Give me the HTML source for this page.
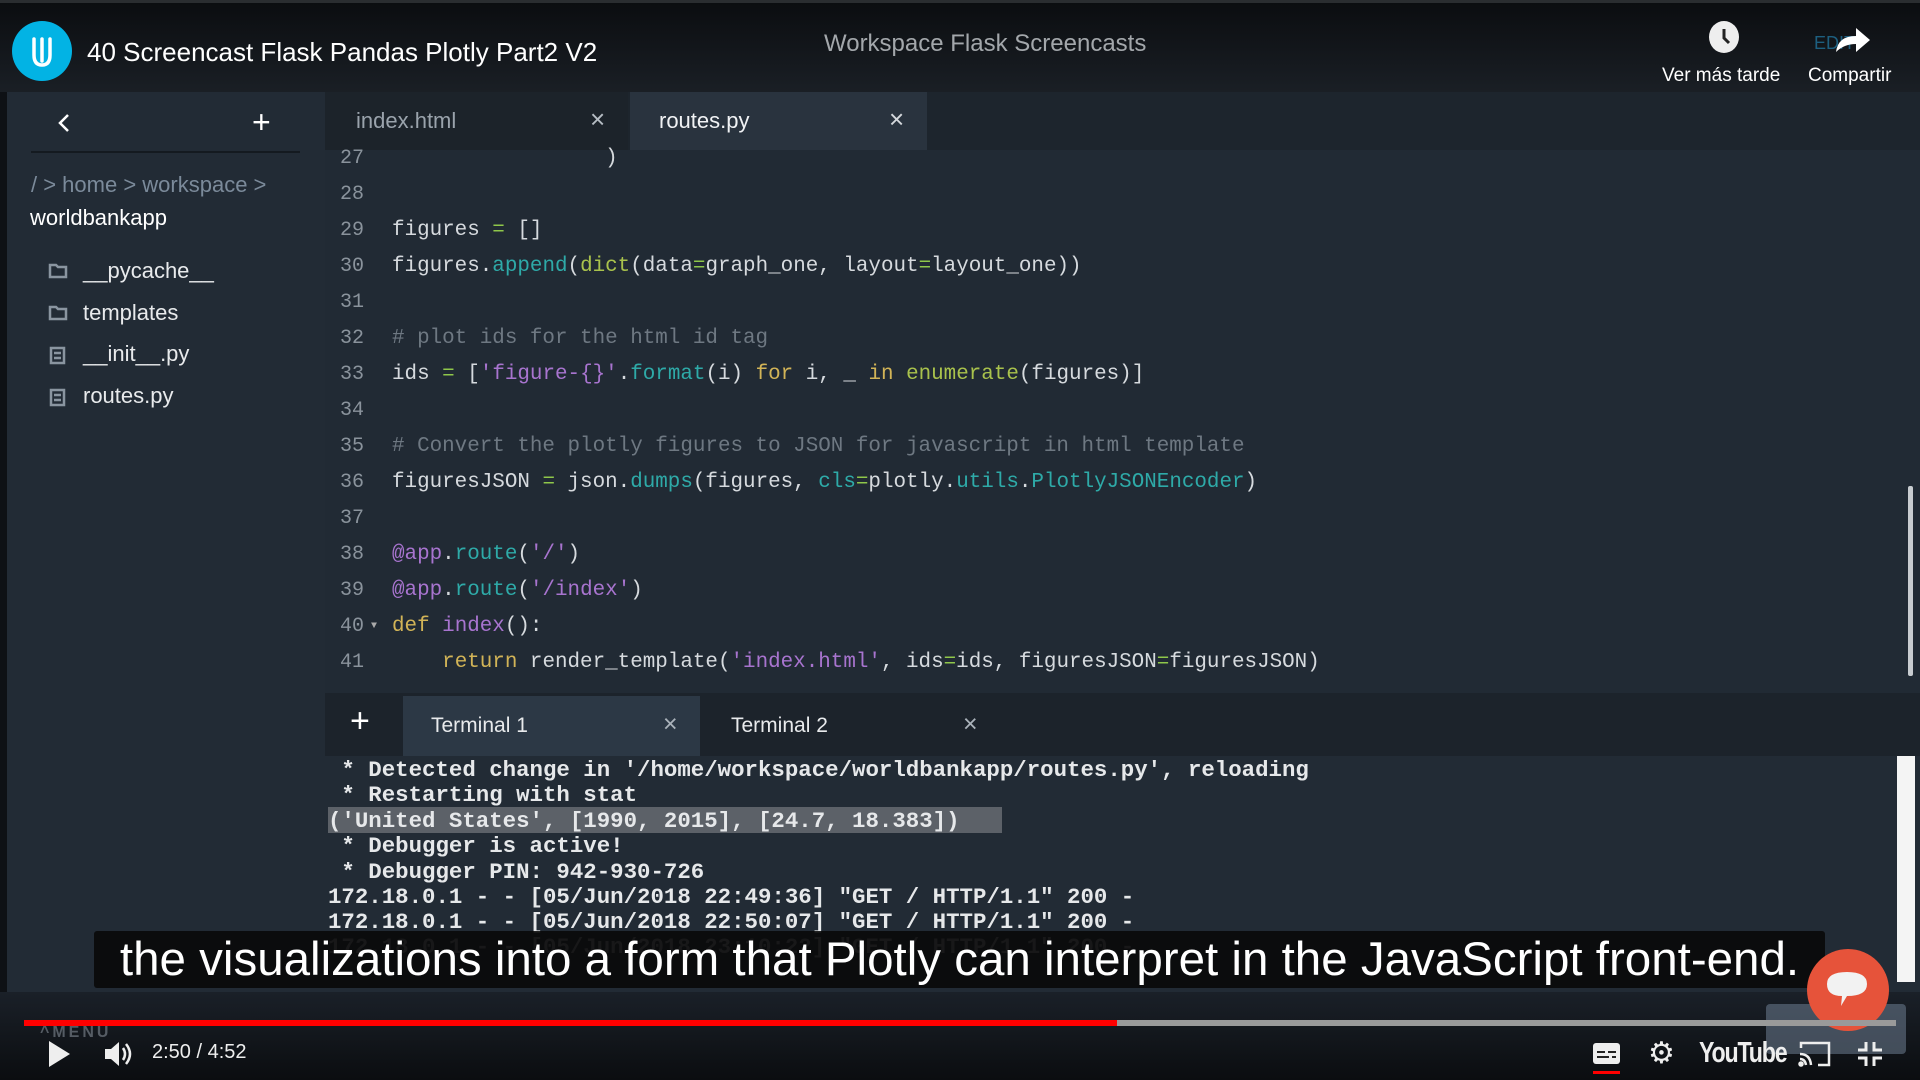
<!DOCTYPE html>
<html><head><meta charset="utf-8"><style>
*{margin:0;padding:0;box-sizing:border-box}
body{width:1920px;height:1080px;overflow:hidden;background:#0e1115;font-family:"Liberation Sans",sans-serif;position:relative}
.a{position:absolute}
.top{left:0;top:0;width:1920px;height:92px;background:linear-gradient(#0b0d10,#1a1f25);border-top:3px solid #2a2d30}
.side{left:7px;top:92px;width:318px;height:900px;background:#222b35}
.tabs{left:325px;top:92px;width:1595px;height:58px;background:#1d252d}
.code{left:325px;top:150px;width:1595px;height:543px;background:#212a34}
.mono{font-family:"Liberation Mono",monospace}
.ln{position:absolute;left:340px;color:#8a939c;font-size:20px}
.cl{position:absolute;left:392px;color:#d6dade;font-size:20.9px;white-space:pre}
.c{color:#6e7882}.t{color:#2eaaa8}.g{color:#a9c24c}.p{color:#a874cf}.y{color:#d2b457}.e{color:#8fc74a}
.term{left:325px;top:756px;width:1595px;height:236px;background:#222b35}
.tl{position:absolute;left:328px;color:#e6e8ea;font-size:22.4px;font-weight:bold;white-space:pre;line-height:25px}
</style></head><body>
<div class="a top"></div>
<div class="a" style="left:12px;top:21px;width:60px;height:60px;border-radius:50%;background:#02b3e4"></div>
<svg class="a" style="left:12px;top:21px" width="60" height="60"><path d="M22 18v16q0 10 8 10t8-10V18M30 18v22" stroke="#fff" stroke-width="3.5" fill="none" stroke-linecap="round"/></svg>
<div class="a" style="left:87px;top:37px;color:#fff;font-size:26px">40 Screencast Flask Pandas Plotly Part2 V2</div>
<div class="a" style="left:824px;top:30px;color:#a3a7ab;font-size:24px">Workspace Flask Screencasts</div>
<div class="a" style="left:1709px;top:21px;width:30px;height:32px;border-radius:50%;background:#eee"></div>
<svg class="a" style="left:1709px;top:21px" width="30" height="32"><path d="M15 8v9l5 5" stroke="#222" stroke-width="3" fill="none"/></svg>
<div class="a" style="left:1662px;top:65px;color:#fff;font-size:19px">Ver más tarde</div>
<div class="a" style="left:1814px;top:33px;color:#1d5f80;font-size:18px">EDIT</div>
<svg class="a" style="left:1832px;top:22px" width="40" height="32"><path d="M4 30q2-16 20-16V6l14 12-14 12v-8q-12 0-20 8z" fill="#fff"/></svg>
<div class="a" style="left:1808px;top:65px;color:#fff;font-size:19px">Compartir</div>

<div class="a side"></div>
<svg class="a" style="left:56px;top:112px" width="16" height="22"><path d="M12 3L4 11l8 8" stroke="#fff" stroke-width="2.5" fill="none"/></svg>
<div class="a" style="left:252px;top:104px;color:#fff;font-size:32px;line-height:36px">+</div>
<div class="a" style="left:31px;top:151px;width:269px;height:2px;background:#141a20"></div>
<div class="a" style="left:31px;top:172px;color:#7b8a9a;font-size:22px">/ &gt; home &gt; workspace &gt;</div>
<div class="a" style="left:30px;top:205px;color:#fff;font-size:22px">worldbankapp</div>
<div class="a" style="left:83px;top:250px;color:#e8eaec;font-size:22px;line-height:41.7px">__pycache__<br>templates<br>__init__.py<br>routes.py</div>
<svg class="a" style="left:48px;top:260px" width="20" height="150" fill="none" stroke="#8a95a0" stroke-width="2.5"><path d="M2 5h6l2 2h8v10H2z"/><path d="M2 47h6l2 2h8v10H2z"/><rect x="3" y="88" width="13" height="15"/><path d="M6 93h7M6 98h7"/><rect x="3" y="130" width="13" height="15"/><path d="M6 135h7M6 140h7"/></svg>

<div class="a tabs"></div>
<div class="a" style="left:325px;top:92px;width:303px;height:58px;background:#1c232a"></div>
<div class="a" style="left:630px;top:92px;width:297px;height:58px;background:#29333e"></div>
<div class="a" style="left:356px;top:108px;color:#9aa3ac;font-size:22px">index.html</div>
<div class="a" style="left:590px;top:104px;color:#b5bcc3;font-size:26px">×</div>
<div class="a" style="left:659px;top:108px;color:#f0f2f4;font-size:22px">routes.py</div>
<div class="a" style="left:889px;top:104px;color:#d4d8dc;font-size:26px">×</div>

<div class="a code"></div>
<div class="mono" style="position:absolute;left:0;top:2px">
<div class="ln" style="top:145px">27</div><div class="cl" style="top:145px">                 )</div>
<div class="ln" style="top:181px">28</div>
<div class="ln" style="top:217px">29</div><div class="cl" style="top:217px">figures <span class="e">=</span> []</div>
<div class="ln" style="top:253px">30</div><div class="cl" style="top:253px">figures.<span class="t">append</span>(<span class="g">dict</span>(data<span class="e">=</span>graph_one, layout<span class="e">=</span>layout_one))</div>
<div class="ln" style="top:289px">31</div>
<div class="ln" style="top:325px">32</div><div class="cl c" style="top:325px"># plot ids for the html id tag</div>
<div class="ln" style="top:361px">33</div><div class="cl" style="top:361px">ids <span class="e">=</span> [<span class="p">'figure-{}'</span>.<span class="t">format</span>(i) <span class="y">for</span> i, _ <span class="y">in</span> <span class="g">enumerate</span>(figures)]</div>
<div class="ln" style="top:397px">34</div>
<div class="ln" style="top:433px">35</div><div class="cl c" style="top:433px"># Convert the plotly figures to JSON for javascript in html template</div>
<div class="ln" style="top:469px">36</div><div class="cl" style="top:469px">figuresJSON <span class="e">=</span> json.<span class="t">dumps</span>(figures, <span class="t">cls</span><span class="e">=</span>plotly.<span class="t">utils</span>.<span class="t">PlotlyJSONEncoder</span>)</div>
<div class="ln" style="top:505px">37</div>
<div class="ln" style="top:541px">38</div><div class="cl" style="top:541px"><span class="p">@app</span>.<span class="t">route</span>(<span class="p">'/'</span>)</div>
<div class="ln" style="top:577px">39</div><div class="cl" style="top:577px"><span class="p">@app</span>.<span class="t">route</span>(<span class="p">'/index'</span>)</div>
<div class="ln" style="top:613px">40</div><div class="cl" style="top:613px"><span class="y">def</span> <span class="p">index</span>():</div>
<div class="a" style="left:371px;top:619px;color:#aaa;font-size:10px">▼</div>
<div class="ln" style="top:649px">41</div><div class="cl" style="top:649px">    <span class="y">return</span> render_template(<span class="p">'index.html'</span>, ids<span class="e">=</span>ids, figuresJSON<span class="e">=</span>figuresJSON)</div>
</div>
<div class="a" style="left:1908px;top:486px;width:5px;height:190px;background:#c8ccd0;border-radius:2px"></div>

<div class="a" style="left:325px;top:693px;width:1595px;height:63px;background:#1c232b"></div>
<div class="a" style="left:403px;top:696px;width:297px;height:60px;background:#2c3845"></div>
<div class="a" style="left:350px;top:702px;color:#fff;font-size:34px">+</div>
<div class="a" style="left:431px;top:714px;color:#e8eaec;font-size:21px">Terminal 1</div>
<div class="a" style="left:663px;top:710px;color:#aab2ba;font-size:25px">×</div>
<div class="a" style="left:731px;top:714px;color:#e8eaec;font-size:21px">Terminal 2</div>
<div class="a" style="left:963px;top:710px;color:#aab2ba;font-size:25px">×</div>

<div class="a term"></div>
<div class="a" style="left:328px;top:807px;width:674px;height:26px;background:#5c6168"></div>
<div class="mono" style="position:absolute;left:0;top:2px">
<div class="tl" style="top:756px"> * Detected change in '/home/workspace/worldbankapp/routes.py', reloading</div>
<div class="tl" style="top:781px"> * Restarting with stat</div>
<div class="tl" style="top:807px">('United States', [1990, 2015], [24.7, 18.383])</div>
<div class="tl" style="top:832px"> * Debugger is active!</div>
<div class="tl" style="top:858px"> * Debugger PIN: 942-930-726</div>
<div class="tl" style="top:883px">172.18.0.1 - - [05/Jun/2018 22:49:36] "GET / HTTP/1.1" 200 -</div>
<div class="tl" style="top:908px">172.18.0.1 - - [05/Jun/2018 22:50:07] "GET / HTTP/1.1" 200 -</div>
<div class="tl" style="top:933px;color:#8a8e92">172.18.0.1 - - [05/Jun/2018 23:10:22] "GET / HTTP/1.1" 200 -</div>
</div>
<div class="a" style="left:1897px;top:756px;width:18px;height:226px;background:#f4f4f4"></div>

<div class="a" style="left:0;top:992px;width:1920px;height:88px;background:linear-gradient(#1a2028,#0b0d10)"></div>
<div class="a" style="left:94px;top:931px;width:1731px;height:57px;background:rgba(8,8,8,.88);border-radius:3px"></div>
<div class="a" style="left:94px;top:931px;width:1731px;height:57px;color:#fff;font-size:47.5px;line-height:57px;text-align:center;white-space:nowrap">the visualizations into a form that Plotly can interpret in the JavaScript front-end.</div>
<div class="a" style="left:1766px;top:1004px;width:140px;height:50px;background:rgba(110,125,145,.55);border-radius:4px"></div>
<div class="a" style="left:1807px;top:949px;width:82px;height:82px;border-radius:50%;background:#e6533a"></div>
<svg class="a" style="left:1822px;top:966px" width="50" height="46"><path d="M5 18q0-12 20-12t20 12-20 12l-6 10 1-10Q5 30 5 18z" fill="#f2f2f2"/></svg>

<div class="a" style="left:24px;top:1020px;width:1093px;height:6px;background:#f00"></div>
<div class="a" style="left:1117px;top:1020px;width:779px;height:6px;background:#9a9a9a"></div>
<div class="a" style="left:40px;top:1024px;color:#555c64;font-size:16px;font-weight:bold;letter-spacing:3px">^MENU</div>
<svg class="a" style="left:48px;top:1040px" width="24" height="28"><path d="M1 1l21 13L1 27z" fill="#eee"/></svg>
<svg class="a" style="left:104px;top:1039px" width="30" height="30"><path d="M1 10h6l8-7v24l-8-7H1z" fill="#eee"/><path d="M19 9q4 6 0 12M22 5q8 10 0 20" stroke="#eee" stroke-width="2.5" fill="none"/></svg>
<div class="a" style="left:152px;top:1041px;color:#eee;font-size:20px">2:50 / 4:52</div>
<svg class="a" style="left:1592px;top:1041px" width="30" height="34"><rect x="1" y="2" width="27" height="21" rx="3" fill="#eee"/><path d="M5 11h8M16 11h8M5 16h12M20 16h4" stroke="#222" stroke-width="2"/><rect x="1" y="30" width="27" height="3" fill="#f00"/></svg>
<div class="a" style="left:1648px;top:1039px;color:#eee;font-size:30px;line-height:30px">⚙</div>
<div class="a" style="left:1699px;top:1037px;color:#eee;font-size:29px;font-weight:bold;letter-spacing:-1.5px;transform:scaleX(.8);transform-origin:left">YouTube</div>
<svg class="a" style="left:1798px;top:1040px" width="34" height="28" fill="none" stroke="#eee" stroke-width="2.5"><path d="M3 8V3h28v22H20"/><path d="M2 14q10 0 11 11M2 19q5 0 6 6"/><circle cx="3" cy="24" r="1.5" fill="#eee"/></svg>
<svg class="a" style="left:1857px;top:1041px" width="26" height="26" fill="none" stroke="#eee" stroke-width="3"><path d="M9 1v8H1M17 1v8h8M9 25v-8H1M17 25v-8h8"/></svg>
</body></html>
